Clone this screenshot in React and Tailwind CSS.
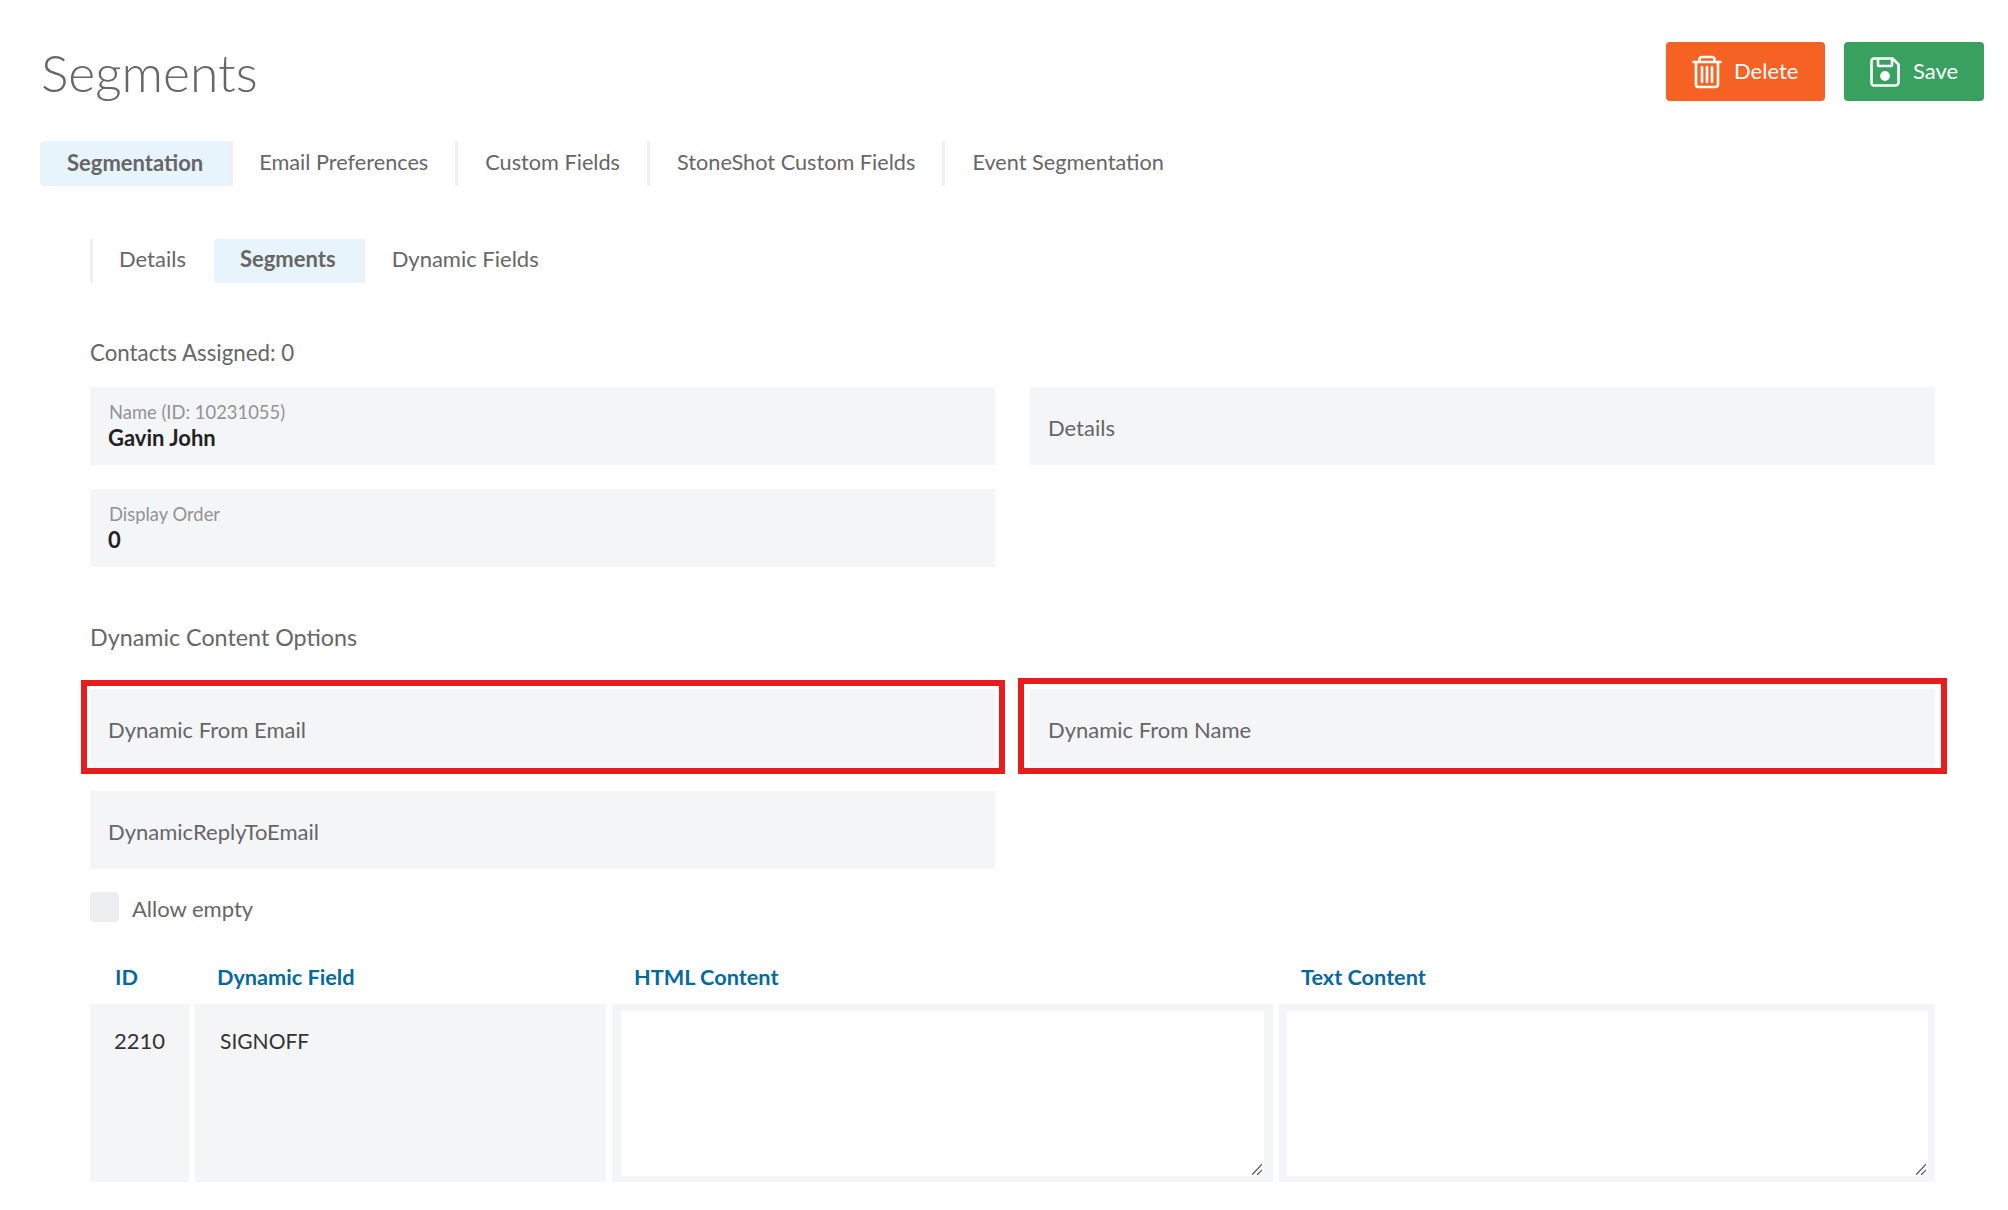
import React from 'react';

const mainTabs = ['Segmentation', 'Email Preferences', 'Custom Fields', 'StoneShot Custom Fields', 'Event Segmentation'];

function TrashIcon() {
    return (
        <svg width="30" height="34" viewBox="0 0 30 34" fill="none" stroke="white" strokeWidth="2.6" strokeLinecap="round" strokeLinejoin="round">
            <path d="M1.5 7h27" />
            <path d="M7.5 7V4.5A2.5 2.5 0 0 1 10 2h10a2.5 2.5 0 0 1 2.5 2.5V7" />
            <path d="M4 7v22.5A2.5 2.5 0 0 0 6.5 32h17a2.5 2.5 0 0 0 2.5-2.5V7" />
            <path d="M10 12v15M15 12v15M20 12v15" />
        </svg>
    );
}

function SaveIcon() {
    return (
        <svg width="30" height="30" viewBox="0 0 30 30" fill="none" stroke="white" strokeWidth="2.6" strokeLinejoin="round">
            <path d="M4 1.5h18.5L28.5 7.5V25.5a3 3 0 0 1-3 3H4a2.5 2.5 0 0 1-2.5-2.5V4A2.5 2.5 0 0 1 4 1.5z" />
            <path d="M8 1.5v6.5a1 1 0 0 0 1 1h12a1 1 0 0 0 1-1V1.5" />
            <circle cx="15" cy="19" r="3.6" fill="white" />
        </svg>
    );
}

function Field({ label, value, className = '' }) {
    return (
        <div className={`h-[78px] bg-[#f4f5f7] pl-[18px] flex flex-col justify-center ${className}`}>
            {value !== undefined ? (
                <>
                    <div className="text-[18.4px] leading-[24px] text-[#939393] pl-px pb-[1px]">{label}</div>
                    <div className="text-[22px] leading-[26px] font-bold text-[#222] pb-[1px]">{value}</div>
                </>
            ) : (
                <div className="text-[22px] leading-[26px] text-[#666] pt-[4px]">{label}</div>
            )}
        </div>
    );
}

function NoteBox() {
    return (
        <div className="relative h-full">
            <textarea className="block w-full h-full bg-white resize-none outline-none" readOnly />
            <svg className="absolute right-[2px] bottom-[1px]" width="10" height="11" viewBox="0 0 10 11" stroke="#555" strokeWidth="1.2">
                <path d="M10 0L0 11M10 6L5 11" />
            </svg>
        </div>
    );
}

export default function App() {
    return (
        <div className="min-h-[1210px] bg-white pl-[40px] pr-[24px] pt-[42px] font-['Lato',sans-serif] text-[#666]">
            {/* Header */}
            <div className="flex items-start justify-between h-[99px]">
                <h1 className="text-[51.6px] leading-[60px] font-light text-[#666] pl-[1px]">Segments</h1>
                <div className="flex gap-[19px]">
                    <button className="flex items-center gap-[12px] h-[59px] w-[159px] pl-[26px] rounded-[4px] bg-[#f56223] text-white text-[22px]">
                        <TrashIcon />
                        <span className="pb-[2px]">Delete</span>
                    </button>
                    <button className="flex items-center gap-[13px] h-[59px] w-[140px] pl-[26px] rounded-[4px] bg-[#38a160] text-white text-[22px]">
                        <SaveIcon />
                        <span className="pb-[2px]">Save</span>
                    </button>
                </div>
            </div>

            {/* Main tabs */}
            <div className="flex h-[45px]">
                {mainTabs.map((tab, i) => (
                    <div
                        key={tab}
                        className={`flex items-center pb-[3px] ${i === 0 ? 'px-[27px] bg-[#e8f4fb] rounded-l-[4px] font-bold text-[22px]' : 'text-[21.7px]'} ${i === 1 ? 'pl-[26px] pr-[27px]' : ''} ${i > 1 ? 'px-[27px]' : ''} ${i < 4 ? 'border-r-[3px] border-[#eef0f3]' : ''}`}
                    >
                        {tab}
                    </div>
                ))}
            </div>

            <div className="pl-[50px] pr-[49px]">
                {/* Sub tabs */}
                <div className="flex h-[44px] mt-[53px]">
                    <div className="flex items-center pl-[26px] pr-[28px] pb-[5px] text-[22px] border-l-[3px] border-[#eef0f3]">Details</div>
                    <div className="flex items-center px-[26px] pb-[5px] text-[22px] font-bold bg-[#e8f4fb] rounded-l-[4px] border-r-[3px] border-[#eef0f3]">Segments</div>
                    <div className="flex items-center px-[27px] pb-[5px] text-[22px]">Dynamic Fields</div>
                </div>

                <div className="mt-[55px] text-[22.3px] leading-[30px]">Contacts Assigned: 0</div>

                {/* Fields */}
                <div className="grid grid-cols-2 gap-x-[35px] gap-y-[24px] mt-[19px]">
                    <Field label="Name (ID: 10231055)" value="Gavin John" />
                    <Field label="Details" />
                    <Field label="Display Order" value="0" />
                </div>

                <div className="mt-[54px] text-[23.3px] leading-[32px]">Dynamic Content Options</div>

                <div className="grid grid-cols-2 gap-x-[35px] gap-y-[24px] mt-[36px]">
                    <div className="relative">
                        <Field label="Dynamic From Email" />
                        <div className="absolute -left-[9px] -right-[10px] -top-[9px] -bottom-[7px] border-[6px] border-[#e81c1c]" />
                    </div>
                    <div className="relative">
                        <Field label="Dynamic From Name" />
                        <div className="absolute -left-[12px] -right-[12px] -top-[11px] -bottom-[7px] border-[6px] border-[#e81c1c]" />
                    </div>
                    <Field label="DynamicReplyToEmail" />
                </div>

                <label className="flex items-center gap-[13px] mt-[23px] h-[30px] text-[22px]">
                    <span className="w-[29px] h-[30px] rounded-[4px] bg-[#eceeef]" />
                    <span className="pt-[2px]">Allow empty</span>
                </label>

                {/* Dynamic fields table */}
                <div className="grid grid-cols-[99px_411px_661px_656px] gap-x-[6px] mt-[37px]">
                    <div className="pl-[25px] pt-[2px] h-[45px] text-[21.7px] font-bold text-[#046a9e]">ID</div>
                    <div className="pl-[22px] pt-[2px] text-[21.7px] font-bold text-[#046a9e]">Dynamic Field</div>
                    <div className="pl-[22px] pt-[2px] text-[21.7px] font-bold text-[#046a9e]">HTML Content</div>
                    <div className="pl-[22px] pt-[2px] text-[21.7px] font-bold text-[#046a9e]">Text Content</div>

                    <div className="h-[178px] bg-[#f4f5f7] pl-[24px] pt-[22px] text-[22px] leading-[30px] text-[#333]">2210</div>
                    <div className="bg-[#f4f5f7] pl-[25px] pt-[22px] text-[21px] leading-[30px] text-[#333]">SIGNOFF</div>
                    <div className="bg-[#f4f5f7] pl-[9px] pr-[9px] pt-[7px] pb-[6px]"><NoteBox /></div>
                    <div className="bg-[#f4f5f7] pl-[8px] pr-[7px] pt-[7px] pb-[6px]"><NoteBox /></div>
                </div>
            </div>
        </div>
    );
}
